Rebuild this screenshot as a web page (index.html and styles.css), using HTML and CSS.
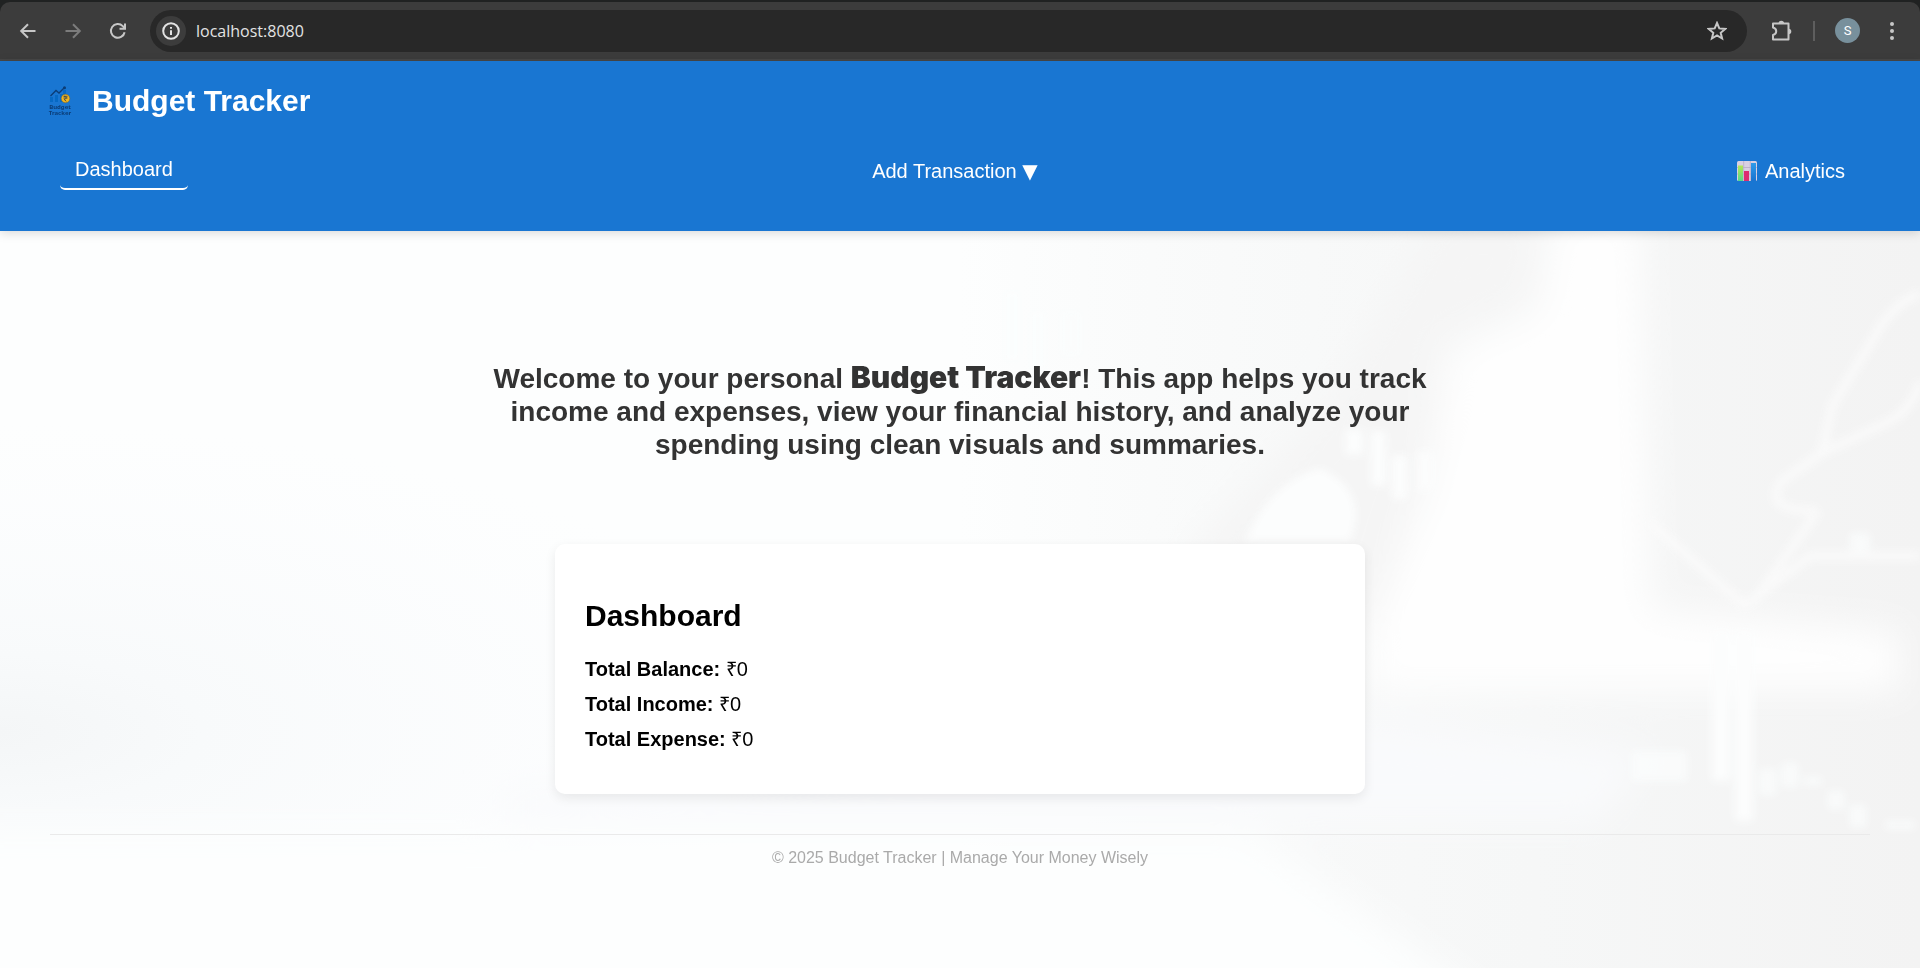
FILE: index.html
```html
<!DOCTYPE html>
<html lang="en">
<head>
<meta charset="utf-8">
<title>Budget Tracker</title>
<link rel="stylesheet" href="styles.css">
</head>
<body>
<div class="browser">
  <div class="toolbar">
    <button class="tool" aria-label="Back"><svg width="20" height="20" viewBox="0 0 20 20"><path d="M17.500 10H3.500M10 3.200L3.200 10L10 16.800"/></svg></button>
    <button class="tool tool-off" aria-label="Forward"><svg width="20" height="20" viewBox="0 0 20 20"><path d="M2.500 10H16.500M10 3.200L16.800 10L10 16.800"/></svg></button>
    <button class="tool" aria-label="Reload"><svg width="20" height="20" viewBox="0 0 20 20"><path d="M16.600 11.200A6.900 6.900 0 1 1 14.800 5.100L17 7.300M17 2.500V7.800H11.500"/></svg></button>
    <div class="address">
      <button class="site-info" aria-label="Site information"><svg width="18" height="18" viewBox="0 0 18 18"><circle cx="9" cy="9" r="7.800"/><path d="M9 8.200V13M9 5V6.800"/></svg></button>
      <input class="url" type="text" value="localhost:8080" aria-label="Address">
      <button class="star" aria-label="Bookmark"><svg width="20" height="20" viewBox="0 0 20 20"><path d="M10 2L12.300 7.400L18.200 7.900L13.700 11.800L15.100 17.500L10 14.400L4.900 17.500L6.300 11.800L1.800 7.900L7.700 7.400Z"/></svg></button>
    </div>
    <button class="tool tool-ext" aria-label="Extensions"><svg width="24" height="24" viewBox="0 0 24 24"><path d="M4 4.500H19.500V20.500H4V16C8.300 15 8.300 9.500 4 8.500Z" stroke-linejoin="round"/><path class="solid" d="M9.500 4.500a2.800 2.800 0 0 1 5.600 0zM19.500 9.700a2.800 2.800 0 0 1 0 5.600z"/></svg></button>
    <span class="separator"></span>
    <button class="avatar" aria-label="Profile">S</button>
    <button class="tool tool-menu" aria-label="Menu"><svg width="20" height="20" viewBox="0 0 20 20"><g class="solid"><circle cx="10" cy="3" r="2"/><circle cx="10" cy="10" r="2"/><circle cx="10" cy="17" r="2"/></g></svg></button>
  </div>
</div>

<header class="header">
  <div class="brand">
    <svg class="logo" width="24" height="30" viewBox="0 0 24 30" aria-hidden="true">
      <path d="M2 11h3v5H2zM7 9h3v7H7zM12 8h3v8h-3zM15 4h3v5h-3z" fill="#0669c4"/>
      <path d="M2.500 10L8 4.500L11 7L16.500 1.500" fill="none" stroke="#0b3d77" stroke-width="1.300"/>
      <circle cx="16.500" cy="1.800" r="1.500" fill="#0b3d77"/>
      <circle cx="17.500" cy="12.500" r="4.300" fill="#f2b51d" stroke="#6d6740" stroke-width=".6"/>
      <path d="M15.500 10.300h4M15.500 12h4M16 10.300c3 0 3 3 0 3l2.300 2" fill="none" stroke="#3d4a4c" stroke-width=".9"/>
      <text class="logo-text" x="12" y="23" text-anchor="middle">Budget</text>
      <text class="logo-text" x="12" y="29" text-anchor="middle">Tracker</text>
    </svg>
    <h1 class="title">Budget Tracker</h1>
  </div>
  <nav class="nav">
    <a class="nav-link nav-active" href="#">Dashboard</a>
    <button class="nav-link">Add Transaction <span class="caret">▼</span></button>
    <a class="nav-link nav-icon" href="#"><svg width="20" height="20" viewBox="0 0 20 20" aria-hidden="true">
      <defs><linearGradient id="g" x2="0" y2="1"><stop stop-color="#b5e655"/><stop offset="1" stop-color="#55d889"/></linearGradient><linearGradient id="b" x2="0" y2="1"><stop stop-color="#2f9bea"/><stop offset="1" stop-color="#1972cf"/></linearGradient></defs>
      <rect width="20" height="20" rx="1.500" fill="#d9d0e2"/><path d="M0 6.500H20M0 13H20M6.700 0V20M13.300 0V20" stroke="#b7abc6" stroke-width=".8"/>
      <path d="M1 4.500h5V20H1z" fill="url(#g)"/><path d="M7 10h5v10H7z" fill="#dc2c70"/><path d="M14 2h5v18h-5z" fill="url(#b)"/></svg>Analytics</a>
  </nav>
</header>

<main class="page">
  <svg class="backdrop" viewBox="0 0 1920 737" preserveAspectRatio="none" aria-hidden="true">
    <defs>
      <linearGradient id="right" x2="1" y2="0"><stop offset=".5" stop-color="#f3f4f4" stop-opacity="0"/><stop offset=".8" stop-color="#f6f7f7"/><stop offset="1" stop-color="#f3f3f3"/></linearGradient>
      <radialGradient id="left" cx="0" cy=".68" r=".42"><stop stop-color="#f4f6f7"/><stop offset=".25" stop-color="#f8fafb"/><stop offset="1" stop-color="#fbfcfe" stop-opacity="0"/></radialGradient>
      <filter id="s4" x="-50%" y="-50%" width="200%" height="200%"><feGaussianBlur stdDeviation="4"/></filter>
      <filter id="s20" x="-50%" y="-50%" width="200%" height="200%"><feGaussianBlur stdDeviation="18"/></filter>
    </defs>
    <rect width="1920" height="737" fill="#fdfefe"/>
    <rect width="1920" height="737" fill="url(#right)"/>
    <rect width="1920" height="737" fill="url(#left)"/>
    <g filter="url(#s20)">
      <path d="M500 560L1370 490L1650 520L1600 590H500Z" fill="#f9fafc"/>
      <path d="M1440 -20H1545L1530 70L1440 110L1430 240L1370 400L1180 330L1330 170Z" fill="#f5f5f5"/>
      <path d="M1555 -20H1640L1650 380L1900 400V460L1370 460V400L1430 250L1450 120L1540 80Z" fill="#fefefe"/>
      <path d="M-40 600H1250L1500 780H-40Z" fill="#fdfefe"/>
    </g>
    <g filter="url(#s4)" fill="#fcfdfd">
      <path d="M1245 310Q1270 250 1320 237Q1370 260 1350 310Z"/>
      <path d="M1345 198h18v26h-18zM1371 200h15v55h-15zM1392 224h15v44h-15zM1418 220h14v40h-14z"/>
      <path d="M1004 60h16v70h-16zM1030 80h16v60h-16zM1060 80h22v45h-22z" opacity=".5"/>
      <path d="M1712 400h18v150h-18zM1735 400h18v190h-18z"/>
      <path d="M1760 538h16v26h-16zM1782 532h16v24h-16zM1804 546h18v8h-18zM1828 560h16v18h-16zM1850 574h16v22h-16zM1885 590h30v8h-30zM1632 520h55v30h-55zM1850 302h20v18h-20z" opacity=".7"/>
      <g fill="none" stroke="#fbfbfb" stroke-width="9" stroke-linejoin="round" opacity=".8">
        <path d="M1920 62Q1890 75 1875 105L1832 175L1822 222L1782 250Q1760 280 1818 280M1822 222L1890 190Q1915 175 1920 150M1818 280L1754 370M1648 290L1745 375L1810 325H1920"/>
      </g>
    </g>
  </svg>
  <p class="intro">Welcome to your personal <strong class="intro-name">Budget Tracker</strong>! This app helps you track income and expenses, view your financial history, and analyze your spending using clean visuals and summaries.</p>
  <section class="card">
    <h2 class="card-title">Dashboard</h2>
    <p class="total"><strong>Total Balance:</strong> ₹0</p>
    <p class="total"><strong>Total Income:</strong> ₹0</p>
    <p class="total"><strong>Total Expense:</strong> ₹0</p>
  </section>
  <footer class="footer">© 2025 Budget Tracker | Manage Your Money Wisely</footer>
</main>
</body>
</html>
```
FILE: styles.css
```css
* { box-sizing: border-box; }
html { height: 100%; }
body {
  margin: 0;
  min-height: 100%;
  display: flex;
  flex-direction: column;
  font-family: "Liberation Sans", Arial, sans-serif;
  font-size: 20px;
  color: #000;
}
button { border: 0; padding: 0; background: none; font: inherit; color: inherit; }

.browser { background: #202222; padding-top: 2px; }
.toolbar {
  display: flex;
  align-items: center;
  height: 59px;
  padding: 0 18px;
  background: #3c3c3c;
  border-bottom: 2px solid #474747;
  border-radius: 10px 10px 0 0;
}
.toolbar svg { display: block; fill: none; stroke: #c7c7c7; stroke-width: 2; }
.toolbar .solid { fill: #c7c7c7; stroke: none; }
.tool { margin-right: 25px; }
.tool-off svg { stroke: #7c7c7c; }
.tool-ext { margin-right: 20px; }
.address {
  flex: 1;
  display: flex;
  align-items: center;
  height: 42px;
  margin-right: 22px;
  margin-left: -3px;
  padding: 0 20px 0 6px;
  border-radius: 21px;
  background: #282828;
}
.site-info {
  display: grid;
  place-items: center;
  width: 30px;
  height: 30px;
  border-radius: 50%;
  background: #3c3c3c;
}
.site-info svg { stroke: #e3e3e3; }
.url {
  flex: 1;
  margin: 0 10px;
  padding: 0;
  border: 0;
  background: none;
  color: #e3e3e3;
  font: 16px "Open Sans", "Noto Sans", sans-serif;
}
.separator { width: 2px; height: 20px; margin-right: 20px; background: #5e5e5e; }
.avatar {
  width: 25px;
  height: 25px;
  margin-right: 22px;
  border-radius: 50%;
  background: #78909c;
  color: #fff;
  font: 13px Roboto, sans-serif;
}
.tool-menu { margin-right: 0; }

.header {
  position: relative;
  z-index: 1;
  padding: 20px 50px 41px;
  background: #1976d2;
  color: #fff;
  box-shadow: 0 2px 10px rgba(0, 0, 0, 0.15);
}
.brand { display: flex; align-items: center; height: 40px; gap: 20px; }
.logo { margin-left: -2px; }
.logo-text { font: bold 6px "Noto Sans", sans-serif; fill: #0b3d77; }
.title { margin: 0; font-size: 30px; }
.nav { display: flex; justify-content: space-between; align-items: flex-end; padding: 28px 10px 0; }
.nav-link {
  padding: 9px 15px 8px;
  border-radius: 5px;
  color: #fff;
  line-height: 22px;
  text-decoration: none;
}
.nav-active { border-bottom: 2px solid #fff; }
.nav-icon { display: flex; align-items: center; gap: 8px; }
.caret { font-family: "DejaVu Sans", sans-serif; line-height: 1; }

.page {
  position: relative;
  flex: 1;
  display: flex;
  flex-direction: column;
  align-items: center;
  padding: 131px 50px 80px;
}
.backdrop { position: absolute; inset: 0; z-index: -1; width: 100%; height: 100%; }
.intro {
  max-width: 960px;
  margin: 0;
  color: #333;
  font-size: 28px;
  font-weight: bold;
  line-height: 33px;
  text-align: center;
}
.intro-name { font: 900 30px/1 Inter, "Liberation Sans", sans-serif; }
.card {
  width: 100%;
  max-width: 810px;
  margin-top: 83px;
  padding: 54px 30px 37px;
  border-radius: 10px;
  background: #fff;
  box-shadow: 0 4px 12px rgba(0, 0, 0, 0.08);
}
.card-title { margin: 0 0 18px; font-size: 30px; line-height: 36px; }
.total { margin: 0; line-height: 35px; }
.footer {
  align-self: stretch;
  margin-top: 40px;
  padding-top: 14px;
  border-top: 1px solid #eaeaea;
  color: #aaa;
  font-size: 16px;
  line-height: 18px;
  text-align: center;
}
```
